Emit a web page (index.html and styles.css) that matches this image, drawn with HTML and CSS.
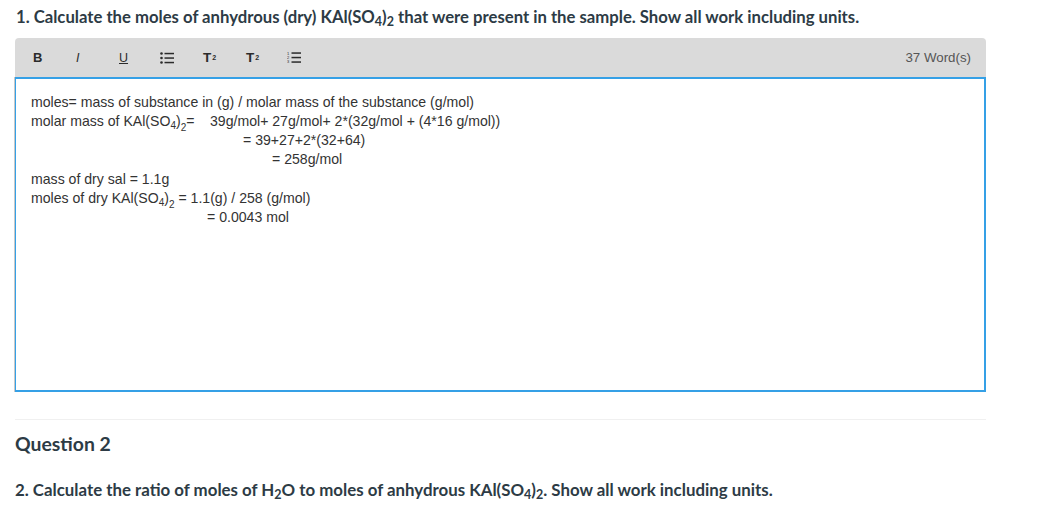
FILE: index.html
```html
<!DOCTYPE html>
<html>
<head>
<meta charset="utf-8">
<link rel="stylesheet" href="styles.css">
</head>
<body>
<div class="page">
  <p class="q-text first">1. Calculate the moles of anhydrous (dry) KAl(SO<sub>4</sub>)<sub>2</sub> that were present in the sample. Show all work including units.</p>
  <div class="editor">
    <div class="toolbar">
      <div class="tools">
        <span class="tool b">B</span>
        <span class="tool i">I</span>
        <span class="tool u">U</span>
        <span class="tool">
          <svg width="14" height="12" viewBox="0 0 14 12"><circle cx="1.5" cy="1.5" r="1.3" fill="#2b2b2b"/><circle cx="1.5" cy="6" r="1.3" fill="#2b2b2b"/><circle cx="1.5" cy="10.5" r="1.3" fill="#2b2b2b"/><rect x="4.5" y="0.8" width="9.5" height="1.5" fill="#2b2b2b"/><rect x="4.5" y="5.3" width="9.5" height="1.5" fill="#2b2b2b"/><rect x="4.5" y="9.8" width="9.5" height="1.5" fill="#2b2b2b"/></svg>
        </span>
        <span class="tool t">T<span class="sup">2</span></span>
        <span class="tool t">T<span class="sub">2</span></span>
        <span class="tool">
          <svg width="14" height="13" viewBox="0 0 14 13"><text x="0" y="3.6" font-size="4" font-family="Liberation Sans" fill="#2b2b2b">1</text><text x="0" y="8" font-size="4" font-family="Liberation Sans" fill="#2b2b2b">2</text><text x="0" y="12.4" font-size="4" font-family="Liberation Sans" fill="#2b2b2b">3</text><rect x="4.5" y="1.3" width="9.5" height="1.5" fill="#2b2b2b"/><rect x="4.5" y="5.8" width="9.5" height="1.5" fill="#2b2b2b"/><rect x="4.5" y="10.3" width="9.5" height="1.5" fill="#2b2b2b"/></svg>
        </span>
      </div>
      <span class="count">37 Word(s)</span>
    </div>
    <div class="content">
      <div class="line">moles= mass of substance in (g) / molar mass of the substance (g/mol)</div>
      <div class="line"><span class="label">molar mass of KAl(SO<sub class="s1">4</sub>)<sub class="s2">2</sub>=</span>39g/mol+ 27g/mol+ 2*(32g/mol + (4*16 g/mol))</div>
      <div class="line ind-a">= 39+27+2*(32+64)</div>
      <div class="line ind-b">= 258g/mol</div>
      <div class="line para">mass of dry sal = 1.1g</div>
      <div class="line">moles of dry KAl(SO<sub class="s1">4</sub>)<sub class="s2">2</sub> = 1.1(g) / 258 (g/mol)</div>
      <div class="line ind-c">= 0.0043 mol</div>
    </div>
  </div>
  <hr class="sep">
  <h2 class="q-title">Question 2</h2>
  <p class="q-text second">2. Calculate the ratio of moles of H<sub>2</sub>O to moles of anhydrous KAl(SO<sub>4</sub>)<sub>2</sub>. Show all work including units.</p>
</div>
</body>
</html>
```

FILE: styles.css
```css
html, body {
  margin: 0;
  padding: 0;
  background: #ffffff;
}

.page {
  width: 971px;
  padding-left: 15px;
}

.q-text {
  font-family: Lato, "Open Sans", sans-serif;
  font-weight: 700;
  font-size: 16.7px;
  color: #2d3b45;
  line-height: 20px;
  margin: 0;
}

.q-text sub {
  font-size: 12.5px;
  vertical-align: -3px;
  line-height: 0;
}

.first {
  padding-top: 7px;
  padding-left: 1px;
}

.second {
  margin-top: 24px;
  font-size: 16.85px;
}

.editor {
  margin-top: 11px;
}

.toolbar {
  height: 39px;
  background: #dadada;
  border-radius: 4px 4px 0 0;
  display: flex;
  align-items: center;
  justify-content: space-between;
  padding: 0 15px 0 18px;
}

.tools {
  display: flex;
  align-items: center;
}

.tool {
  width: 41px;
  display: flex;
  align-items: center;
  justify-content: flex-start;
  font-family: "Liberation Sans", Arial, sans-serif;
  color: #2b2b2b;
  font-size: 12.5px;
}

.tool.b {
  font-weight: 700;
  font-size: 13px;
}

.tool.i {
  font-style: italic;
  padding-left: 2px;
}

.tool.u {
  text-decoration: underline;
  padding-left: 2px;
}

.tool.t {
  font-weight: 700;
  font-size: 13.5px;
  padding-left: 2px;
}

.tool .sup {
  font-size: 7px;
  vertical-align: 6px;
  margin-left: 1px;
}

.tool .sub {
  font-size: 7px;
  vertical-align: -2px;
  margin-left: 1px;
}

.count {
  font-family: "Liberation Sans", Arial, sans-serif;
  font-size: 13.3px;
  color: #555555;
}

.content {
  height: 284px;
  border: 2px solid #35a0e6;
  border-left-width: 1px;
  box-shadow: -1px 0 0 #c8c8c8;
  padding: 14px 15px 13px 15px;
  font-family: "Liberation Sans", Arial, sans-serif;
  font-size: 14.1px;
  color: #333333;
}

.line {
  line-height: 19px;
  height: 19px;
  white-space: nowrap;
}

.line sub {
  font-size: 10px;
  line-height: 0;
}

.line .s1 {
  vertical-align: -3px;
}

.line .s2 {
  vertical-align: -5px;
}

.label {
  display: inline-block;
  width: 179px;
}

.ind-a {
  padding-left: 212px;
}

.ind-b {
  padding-left: 241px;
}

.para {
  margin-top: 1px;
}

.ind-c {
  padding-left: 176px;
}

.sep {
  border: 0;
  border-top: 1px solid #f0f0f0;
  margin: 27px 0 0 0;
  height: 0;
}

.q-title {
  font-family: Lato, "Open Sans", sans-serif;
  font-weight: 700;
  font-size: 19.4px;
  color: #2d3b45;
  margin: 12px 0 0 0;
  line-height: 24px;
}
```
